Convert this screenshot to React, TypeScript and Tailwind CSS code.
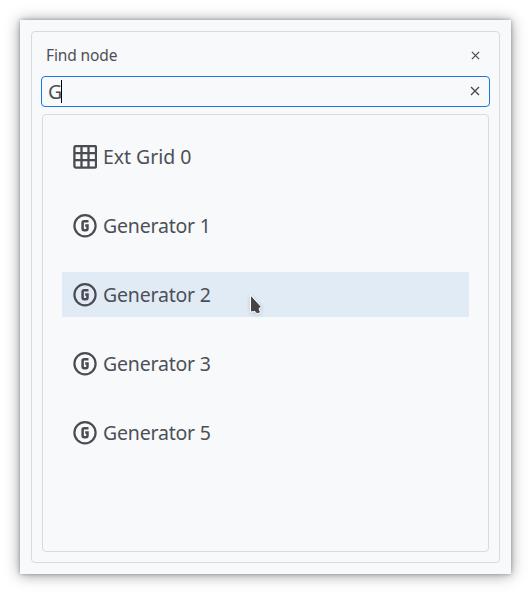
import React, { useState } from 'react';

type Node = { kind: 'grid' | 'generator'; label: string };

const nodes: Node[] = [
  { kind: 'grid', label: 'Ext Grid 0' },
  { kind: 'generator', label: 'Generator 1' },
  { kind: 'generator', label: 'Generator 2' },
  { kind: 'generator', label: 'Generator 3' },
  { kind: 'generator', label: 'Generator 5' },
];

function GridIcon() {
  return (
    <svg width="24" height="24" viewBox="0 0 24 24" fill="none" stroke="#4b4c52" strokeWidth="2.3" className="shrink-0">
      <rect x="1.4" y="1" width="21.6" height="21.6" rx="1.5" />
      <path d="M8.5 1v22M15.5 1v22M1 8.2h22M1 15.2h22" />
    </svg>
  );
}

function GeneratorIcon() {
  return (
    <svg width="24" height="24" viewBox="0 0 24 24" fill="none" stroke="#4b4c52" className="shrink-0">
      <circle cx="12" cy="11.7" r="10.6" strokeWidth="2.2" />
      <path d="M15.5 7.2H11.2A1.6 1.6 0 0 0 9.600 8.800V14.600A1.600 1.600 0 0 0 11.200 16.200H12.900A1.600 1.600 0 0 0 14.500 14.600V11.600H12.200" strokeWidth="2.5" />
    </svg>
  );
}

function CloseIcon({ size }: { size: number }) {
  return (
    <svg width={size} height={size} viewBox="0 0 10 10" stroke="#4b4c52" strokeWidth="1.4" className="shrink-0">
      <path d="M1 1l8 8M9 1L1 9" />
    </svg>
  );
}

function Pointer() {
  return (
    <svg width="14" height="22" viewBox="0 0 14 22" className="absolute left-[187px] top-[22px] drop-shadow-sm">
      <path d="M1.500 1L12.500 13L10 14.500L11.500 18.500L8 20L6 17.500L1.500 18Z" fill="#454545" stroke="#fff" strokeWidth="1" />
    </svg>
  );
}

export default function App() {
  const [query, setQuery] = useState('G');
  return (
    <div className="h-[594px] w-[531px] overflow-hidden bg-white p-5 font-['Noto_Sans','Open_Sans',sans-serif] text-[#4d4f56]">
      <div className="h-[554px] w-[491px] bg-[#f7f9fb] p-[11px] shadow-[0_1px_14px_rgba(0,0,0,0.4),0_0_4px_rgba(0,0,0,0.3)]">
        <div className="flex h-[532px] w-[469px] flex-col rounded-[4px] border border-[#dadbde] px-[9px] pb-[10px]">
          <div className="flex h-[44px] shrink-0 items-center justify-between pl-[5px] pr-[10px] pt-[3px]">
            <span className="pb-[2px] text-[15.500px] leading-5 tracking-[-0.120px]">Find node</span>
            <button type="button" aria-label="Close"><CloseIcon size={9} /></button>
          </div>
          <div className="flex h-[31px] shrink-0 items-center rounded-[4px] border border-[#1a73e8] pl-[6px] pr-[9px]">
            <div className="flex min-w-0 grow items-center">
              <span className="w-[13px] text-[19.500px] leading-7 tracking-[-0.500px]">{query}</span>
              <span className="h-[23px] w-px bg-black" />
            </div>
            <button type="button" aria-label="Clear" className="pb-[2px]" onClick={() => setQuery('')}><CloseIcon size={10} /></button>
          </div>
          <div className="mx-px mt-[7px] grow rounded-[4px] border border-[#dadbde] px-[19px] pt-[19px]">
            <div className="flex flex-col gap-6">
              {nodes.map((n) => (
                <div
                  key={n.label}
                  className={`relative flex h-[45px] items-center gap-[6px] rounded-[1px] pl-[11px] ${n.label === 'Generator 2' ? 'bg-[#e1ebf5]' : ''}`}
                >
                  {n.kind === 'grid' ? <GridIcon /> : <GeneratorIcon />}
                  <span className={`whitespace-nowrap text-[19.500px] leading-7 ${n.kind === 'grid' ? 'tracking-[-0.050px]' : 'tracking-[-0.200px]'}`}>{n.label}</span>
                  {n.label === 'Generator 2' && <Pointer />}
                </div>
              ))}
            </div>
          </div>
        </div>
      </div>
    </div>
  );
}
